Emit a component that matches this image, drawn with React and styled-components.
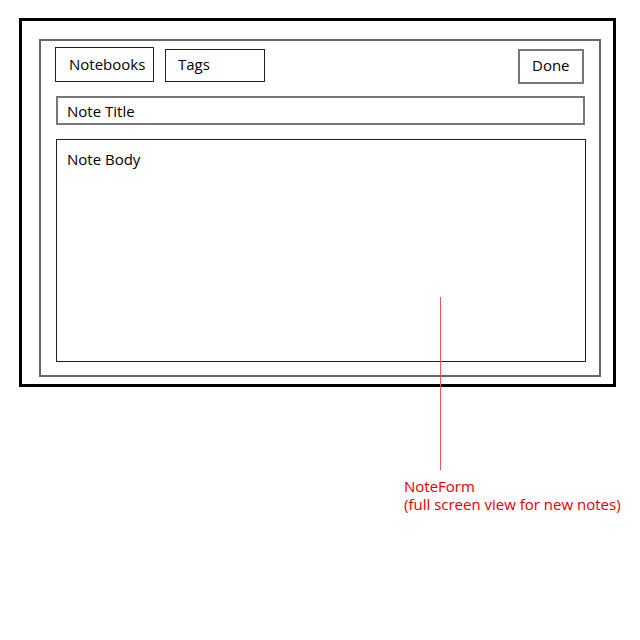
import React from 'react';
import styled, { createGlobalStyle } from 'styled-components';

const Global = createGlobalStyle`
  html, body { margin: 0; padding: 0; background: #fff; }
  body { font-family: "Open Sans", "Liberation Sans", sans-serif; }
  * { box-sizing: border-box; }
`;

// whole sketch area
const Page = styled.div`
  position: relative;
  width: 640px;
  height: 640px;
  padding: 18px 0 0 19px;
`;

// thick black device frame
const Frame = styled.div`
  width: 597px;
  height: 369px;
  border: 3px solid #000;
  padding: 18px 0 0 17px;
`;

// grey form panel inside the frame
const Panel = styled.div`
  width: 562px;
  height: 338px;
  border: 2px solid #666;
  padding: 6px 15px 0 14px;
  display: flex;
  flex-direction: column;
`;

const Toolbar = styled.div`
  display: flex;
  align-items: flex-start;
  gap: 11px;
  height: 40px;
`;

const Button = styled.div`
  width: ${p => p.w}px;
  height: ${p => p.h}px;
  margin-top: ${p => p.top || 0}px;
  margin-left: ${p => (p.right ? 'auto' : '0')};
  border: ${p => (p.grey ? '2px solid #777' : '1px solid #222')};
  display: flex;
  align-items: center;
  padding-left: ${p => p.pad}px;
  padding-bottom: ${p => p.lift || 0}px;
  font-size: 15px;
  color: #000;
`;

const Field = styled.div`
  margin-left: 1px;
  margin-top: ${p => p.top}px;
  width: ${p => p.w}px;
  height: ${p => p.h}px;
  border: ${p => (p.grey ? '2px solid #777' : '1px solid #222')};
  display: flex;
  align-items: ${p => (p.grey ? 'center' : 'flex-start')};
  padding: ${p => (p.grey ? '0 0 0 9px' : '9px 0 0 10px')};
  font-size: 15px;
  color: #000;
`;

// red annotation over the sketch
const Pointer = styled.div`
  position: absolute;
  left: 440px;
  top: 297px;
  width: 1px;
  height: 173px;
  background: #e05a5a;
`;

const Note = styled.div`
  position: absolute;
  left: 404px;
  top: 477px;
  font-size: 15px;
  line-height: 18px;
  color: #e00000;
`;

export default function App() {
  return (
    <>
      <Global />
      <Page>
        <Frame>
          <Panel>
            <Toolbar>
              <Button w={99} h={35} pad={13} lift={1}>Notebooks</Button>
              <Button w={100} h={33} top={2} pad={12} lift={3}>Tags</Button>
              <Button w={66} h={35} top={2} pad={12} lift={3} grey right>Done</Button>
            </Toolbar>
            <Field grey w={529} h={29} top={9}>Note Title</Field>
            <Field w={530} h={223} top={14}>Note Body</Field>
          </Panel>
        </Frame>
        <Pointer />
        <Note>
          NoteForm
          <br />
          (full screen view for new notes)
        </Note>
      </Page>
    </>
  );
}
